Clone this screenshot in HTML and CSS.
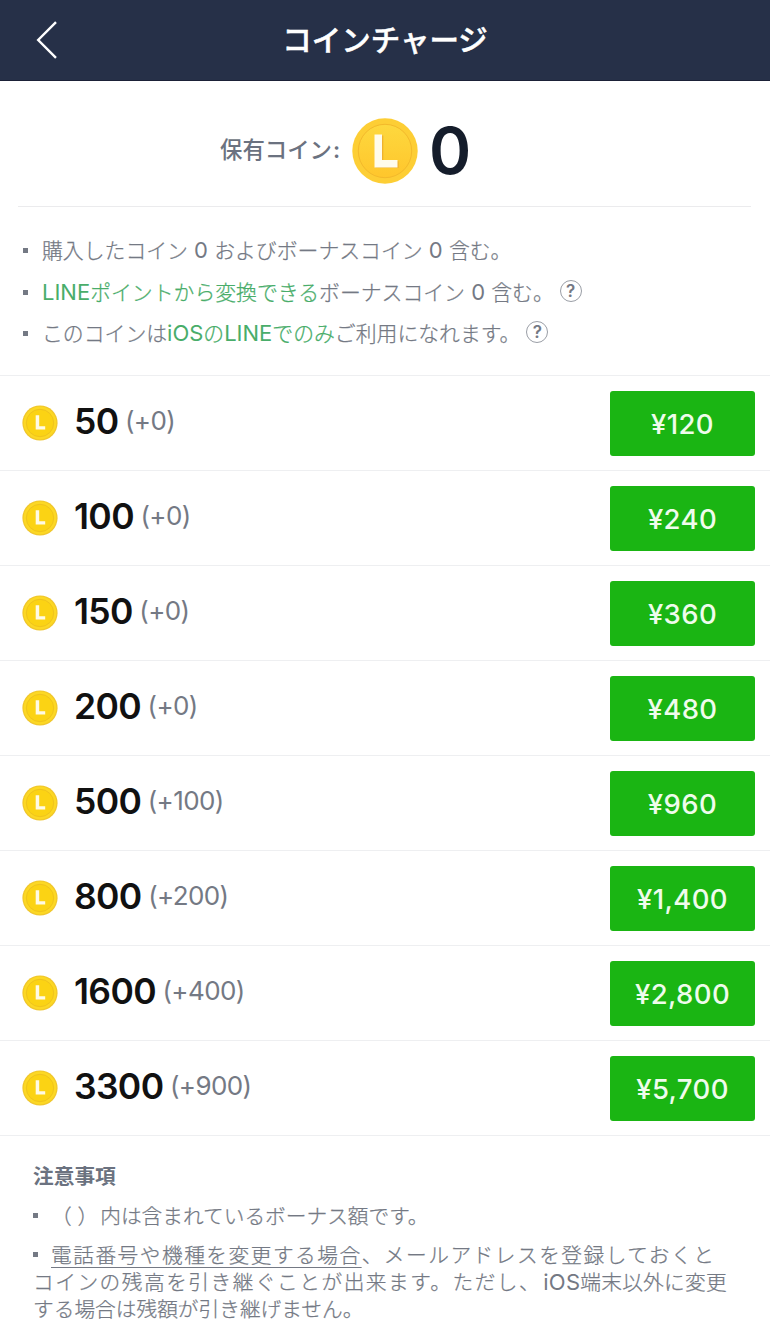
FILE: index.html
```html
<!DOCTYPE html>
<html lang="ja">
<head>
<meta charset="utf-8">
<title>コインチャージ</title>
<link rel="stylesheet" href="styles.css">
</head>
<body>
<svg class="defs" width="0" height="0" aria-hidden="true">
  <defs>
    <linearGradient id="gold" x1="0" y1="0" x2="0" y2="1"><stop offset="0" stop-color="#fdd83e"/><stop offset="1" stop-color="#ffc62c"/></linearGradient>
    <symbol id="coin" viewBox="0 0 36 36">
      <circle cx="18" cy="18" r="17.6" fill="#f0c62c"/>
      <circle cx="18" cy="18" r="16.4" fill="#fcd824"/>
      <circle cx="18" cy="18" r="13.7" fill="#fbd314" stroke="#efc31e" stroke-width="1"/>
      <path d="M13.700 10.300h3.500v10.900h6v3.200h-9.500z" fill="#fffbe6"/>
    </symbol>
  </defs>
</svg>
<header class="bar">
  <svg class="back" width="24" height="40" viewBox="0 0 24 40"><path d="M21 2.200 3.200 20 21 37.800" fill="none" stroke="#fff" stroke-width="2.400"/></svg>
  <h1 class="title">コインチャージ</h1>
</header>
<section class="balance">
  <span class="balance-label">保有コイン<span class="colon">:</span></span>
  <svg class="balance-coin" viewBox="0 0 66 66">
    <circle cx="33" cy="33" r="32.7" fill="#fdce35"/>
    <circle cx="33" cy="33" r="26.7" fill="url(#gold)" stroke="#f3b92b" stroke-width="1"/>
    <path d="M23.500 17.500h7.800v25.800h15.400v6.700H23.500z" fill="#efb22e"/>
    <path d="M22.500 16.500h7.500v25.500h15.500v7.500h-23z" fill="#fffcec"/>
  </svg>
  <span class="balance-value">0</span>
</section>
<ul class="info">
  <li><span>購入したコイン<span class="lat"> 0 </span>およびボーナスコイン<span class="lat"> 0 </span>含む。</span></li>
  <li><span><a><span class="lat">LINE</span>ポイントから変換できる</a>ボーナスコイン<span class="lat"> 0 </span>含む。</span><span class="help">?</span></li>
  <li><span>このコインは<a><span class="lat">iOS</span>の<span class="lat">LINE</span>でのみ</a>ご利用になれます。</span><span class="help">?</span></li>
</ul>
<ul class="plans">
  <li><svg class="coin"><use href="#coin"/></svg><b>50</b><span class="bonus">(+0)</span><button>¥120</button></li>
  <li><svg class="coin"><use href="#coin"/></svg><b>100</b><span class="bonus">(+0)</span><button>¥240</button></li>
  <li><svg class="coin"><use href="#coin"/></svg><b>150</b><span class="bonus">(+0)</span><button>¥360</button></li>
  <li><svg class="coin"><use href="#coin"/></svg><b>200</b><span class="bonus">(+0)</span><button>¥480</button></li>
  <li><svg class="coin"><use href="#coin"/></svg><b>500</b><span class="bonus">(+100)</span><button>¥960</button></li>
  <li><svg class="coin"><use href="#coin"/></svg><b>800</b><span class="bonus">(+200)</span><button>¥1,400</button></li>
  <li><svg class="coin"><use href="#coin"/></svg><b>1600</b><span class="bonus">(+400)</span><button>¥2,800</button></li>
  <li><svg class="coin"><use href="#coin"/></svg><b>3300</b><span class="bonus">(+900)</span><button>¥5,700</button></li>
</ul>
<section class="notes">
  <h2>注意事項</h2>
  <p class="note"><i class="dot"></i><span class="paren">（ ）</span>内は含まれているボーナス額です。</p>
  <p class="note wide"><i class="dot"></i><a class="link">電話番号や機種を変更する場合</a>、メールアドレスを登録しておくと</p>
  <p class="note wide">コインの残高を引き継ぐことが出来ます。ただし、<span class="tight"><span class="lat">iOS</span>端末以外に変更</span></p>
  <p class="note">する場合は残額が引き継げません。</p>
</section>
</body>
</html>
```
FILE: styles.css
```css
* { box-sizing: border-box; margin: 0; padding: 0; }
body {
  width: 770px;
  height: 1333px;
  overflow: hidden;
  background: #fff;
  color: #747984;
  font-family: Inter, "Noto Sans CJK JP", sans-serif;
}
ul { list-style: none; }
.defs { position: absolute; }

.bar {
  display: grid;
  grid-template-columns: 80px 1fr 80px;
  align-items: center;
  height: 81px;
  background: #263048;
  border-bottom: 1px solid #1b2137;
}
.back { margin-left: 35px; }
.title {
  color: #fff;
  font-size: 29.500px;
  line-height: 80px;
  font-weight: 500;
  text-align: center;
  -webkit-text-stroke: .500px #fff;
}

.balance {
  display: flex;
  align-items: center;
  height: 126px;
  margin: 0 19px 0 18px;
  padding: 14px 0 0 202px;
  border-bottom: 1px solid #ebebed;
}
.balance-label {
  width: 132px;
  margin-top: -2px;
  font-size: 22.400px;
  line-height: 30px;
  font-weight: 500;
  color: #6b7280;
  white-space: nowrap;
}
.colon { margin-left: 1px; font-weight: 600; }
.balance-coin { width: 66px; height: 66px; flex: none; }
.balance-value {
  margin-left: 11px;
  font-size: 64px;
  line-height: 64px;
  font-weight: 600;
  color: #151d2b;
}

.info {
  height: 169px;
  padding: 23px 0 0 23px;
  border-bottom: 1px solid #eeeff1;
  font-size: 20.850px;
  font-weight: 300;
  -webkit-text-stroke: .250px;
}
.info li {
  display: flex;
  align-items: center;
  height: 41.500px;
  line-height: 41px;
  white-space: nowrap;
}
.info li::before {
  content: "";
  width: 5px;
  height: 5px;
  margin-right: 14px;
  background: #747984;
}
.info a { color: #49ad6a; }
.lat {
  font-size: 22px;
  font-weight: 400;
  line-height: 1;
  white-space: pre;
  -webkit-text-stroke: 0;
}
.help {
  width: 22px;
  height: 22px;
  margin: -3px 0 0 6px;
  border: 1px solid #9a9ea6;
  border-radius: 50%;
  font-size: 17px;
  line-height: 20px;
  font-weight: 600;
  text-align: center;
  -webkit-text-stroke: 0;
}

.plans li {
  display: flex;
  align-items: center;
  height: 95px;
  padding: 0 15px 0 22px;
  border-bottom: 1px solid #eeeff1;
}
.coin { width: 36px; height: 36px; }
.plans b {
  margin: -3px 0 0 16px;
  font-size: 35.500px;
  line-height: 40px;
  font-weight: 600;
  letter-spacing: -.650px;
  color: #111;
}
.bonus {
  margin: -5px 0 0 6.500px;
  font-size: 26px;
  line-height: 32px;
  letter-spacing: -.600px;
}
.plans button {
  width: 145px;
  height: 65px;
  margin-left: auto;
  padding-top: 2px;
  border: 0;
  border-radius: 3px;
  background: #1ab513;
  color: #effcec;
  font: 550 27.500px/34px Inter, sans-serif;
  letter-spacing: .400px;
}

.notes { padding: 28px 0 0 33px; }
.notes h2 {
  font-size: 20.700px;
  line-height: 26px;
  font-weight: 600;
  color: #6b7280;
}
.note {
  font-size: 20.700px;
  line-height: 27px;
  font-weight: 300;
  white-space: nowrap;
  -webkit-text-stroke: .250px;
}
h2 + .note { margin: 13px 0 12px; }
.paren { margin-right: 2px; }
.dot {
  display: inline-block;
  width: 5px;
  height: 5px;
  margin-right: 13px;
  vertical-align: 6px;
  background: #747984;
}
.wide { letter-spacing: 1.500px; }
.tight { margin-left: 2px; letter-spacing: .250px; }
.link {
  text-decoration: underline 1px;
  text-underline-offset: 4px;
  text-decoration-skip-ink: none;
}
```
